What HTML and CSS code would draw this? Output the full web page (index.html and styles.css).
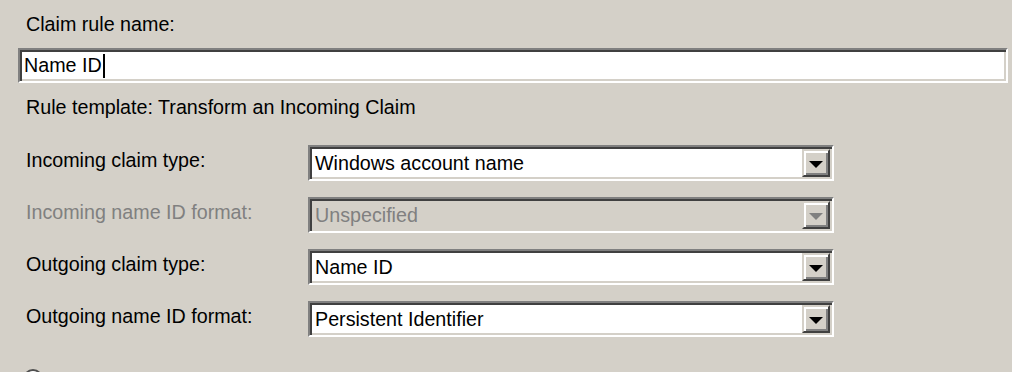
FILE: index.html
```html
<!DOCTYPE html>
<html lang="en">
<head>
  <meta charset="UTF-8" />
  <title>Edit Rule - Name ID</title>
  <link rel="stylesheet" href="styles.css">
</head>
<body>

<div class="dialog">
  <div class="caption">Claim rule name:</div>
  <div class="textbox"><span>Name ID</span><span class="caret"></span></div>
  <div class="caption template">Rule template: Transform an Incoming Claim</div>

  <div class="rows">
    <div class="row">
      <label>Incoming claim type:</label>
      <div class="combo">
        <span class="value">Windows account name</span>
        <span class="drop"><span class="arrow"></span></span>
      </div>
    </div>
    <div class="row disabled">
      <label>Incoming name ID format:</label>
      <div class="combo">
        <span class="value">Unspecified</span>
        <span class="drop"><span class="arrow"></span></span>
      </div>
    </div>
    <div class="row">
      <label>Outgoing claim type:</label>
      <div class="combo">
        <span class="value">Name ID</span>
        <span class="drop"><span class="arrow"></span></span>
      </div>
    </div>
    <div class="row">
      <label>Outgoing name ID format:</label>
      <div class="combo">
        <span class="value">Persistent Identifier</span>
        <span class="drop"><span class="arrow"></span></span>
      </div>
    </div>
  </div>

  <div class="radio-row"><span class="radio"></span></div>
</div>

</body>
</html>
```

FILE: styles.css
```css
body {
  margin: 0;
  background: #d4d0c8;
  font-family: 'Liberation Sans', Arial, sans-serif;
  font-size: 19.7px;
  color: #000;
  height: 372px;
  overflow: hidden;
}
.dialog {
  padding: 12px 4px 0 18px;
}
.caption {
  padding-left: 8px;
  height: 24px;
  line-height: 24px;
}
.template {
  margin-top: 12px;
}
.textbox {
  margin-top: 12px;
  height: 31px;
  background: #fff;
  border: 2px solid;
  border-color: #808080 #fff #fff #808080;
  box-shadow: inset 2px 2px #404040, inset -2px -2px #d4d0c8;
  display: flex;
  align-items: center;
  padding-left: 4px;
}
.caret {
  display: inline-block;
  width: 2px;
  height: 24px;
  background: #000;
  margin-left: 1px;
}
.rows {
  margin-top: 26px;
  display: flex;
  flex-direction: column;
  gap: 16px;
}
.row {
  display: flex;
  align-items: center;
  padding-left: 8px;
}
.row label {
  width: 282px;
  padding-bottom: 6px;
}
.combo {
  width: 522px;
  height: 32px;
  background: #fff;
  border: 2px solid;
  border-color: #808080 #fff #fff #808080;
  box-shadow: inset 2px 2px #404040, inset -2px -2px #d4d0c8;
  display: flex;
  align-items: stretch;
}
.combo .value {
  flex: 1;
  padding: 4px 0 0 5px;
  line-height: 24px;
}
.drop {
  width: 28px;
  margin: 2px 2px 2px 0;
  background: #d4d0c8;
  border: 2px solid;
  border-color: #d4d0c8 #404040 #404040 #d4d0c8;
  box-shadow: inset 2px 2px #fff, inset -2px -2px #808080;
  display: flex;
  align-items: center;
  justify-content: center;
  box-sizing: border-box;
}
.arrow {
  width: 0;
  height: 0;
  border-left: 7px solid transparent;
  border-right: 7px solid transparent;
  border-top: 7px solid #000;
  margin-top: 2px;
}
.disabled {
  color: #808080;
}
.disabled .combo {
  background: #d4d0c8;
}
.disabled .arrow {
  border-top-color: #808080;
}
.radio-row {
  margin-top: 32px;
  padding-left: 5px;
  height: 10px;
  overflow: hidden;
}
.radio {
  display: block;
  width: 16px;
  height: 16px;
  border-radius: 50%;
  border: 2px solid;
  border-color: #505050 #fff #fff #505050;
  background: #fff;
}
```
